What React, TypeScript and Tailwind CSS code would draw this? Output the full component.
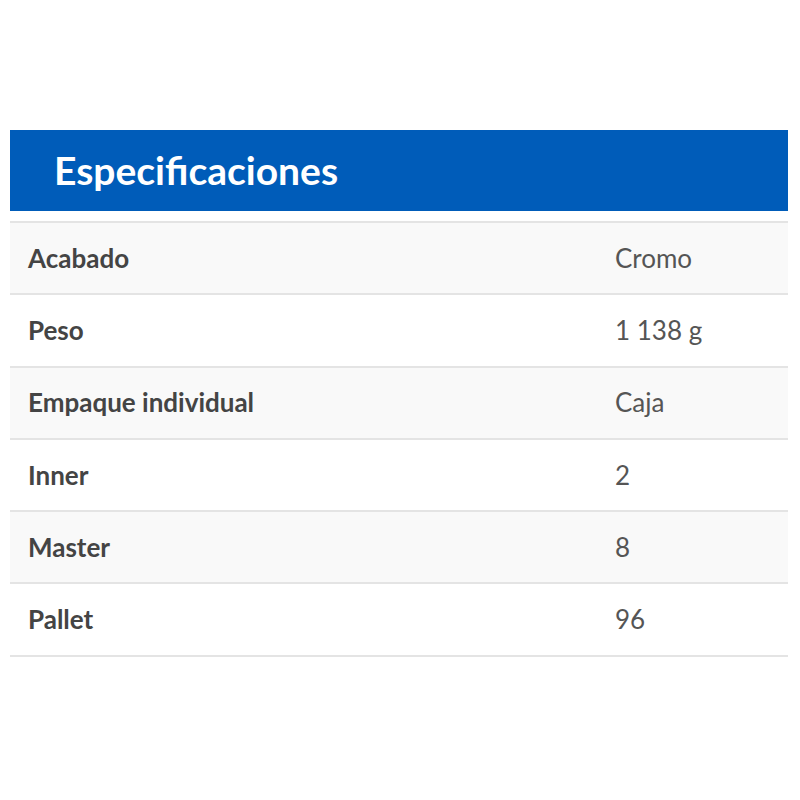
const specs = [
  { label: "Acabado", value: "Cromo" },
  { label: "Peso", value: "1 138 g" },
  { label: "Empaque individual", value: "Caja" },
  { label: "Inner", value: "2" },
  { label: "Master", value: "8" },
  { label: "Pallet", value: "96" },
];

export default function App() {
  return (
    <div
      className="min-h-[800px] w-[800px] bg-white pt-[130px]"
      style={{ fontFamily: "Lato, 'Open Sans', sans-serif" }}
    >
      <div className="mx-[10px] w-[778px]">
        <div className="flex h-[81px] items-center bg-[#005cb9] pl-[44px]">
          <h2 className="text-[39px] font-bold leading-none text-white">
            Especificaciones
          </h2>
        </div>
        <div className="mt-[10px] border-b-2 border-[#e4e4e4]">
          {specs.map((row, i) => (
            <div
              key={row.label}
              className={`flex h-[72.3px] items-center border-t-2 border-[#e4e4e4] text-[26px] text-[#444] ${
                i % 2 === 0 ? "bg-[#f9f9f9]" : "bg-white"
              }`}
            >
              <div className="w-[605px] pl-[18px] font-bold">{row.label}</div>
              <div className="text-[#555]">{row.value}</div>
            </div>
          ))}
        </div>
      </div>
    </div>
  );
}
